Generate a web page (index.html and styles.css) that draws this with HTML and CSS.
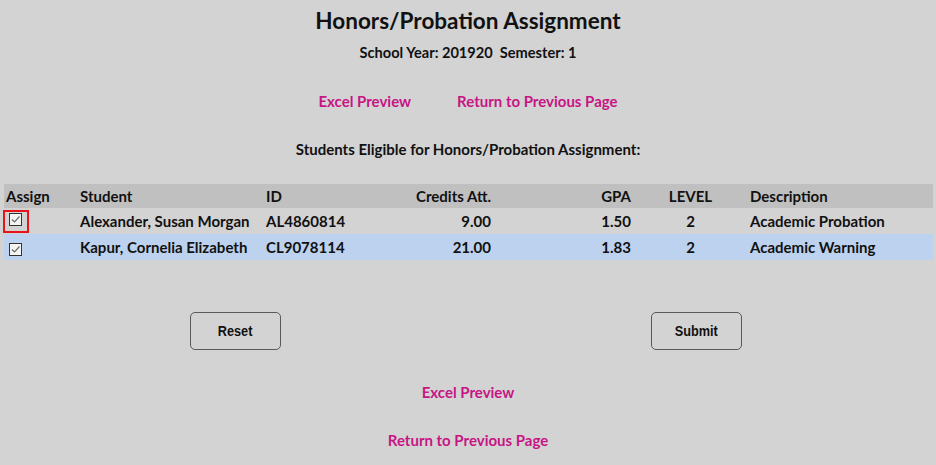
FILE: index.html
```html
<!DOCTYPE html>
<html>
<head>
<meta charset="utf-8">
<link rel="stylesheet" href="styles.css">
</head>
<body>
<h1 class="title">Honors/Probation Assignment</h1>
<p class="term">School Year: 201920&nbsp;&nbsp;Semester: 1</p>
<div class="links top-links">
  <a href="#">Excel Preview</a>
  <a href="#">Return to Previous Page</a>
</div>
<p class="eligible">Students Eligible for Honors/Probation Assignment:</p>
<table class="grid">
  <colgroup>
    <col class="c-assign"><col class="c-student"><col class="c-id"><col class="c-credits"><col class="c-gpa"><col class="c-level"><col class="c-desc">
  </colgroup>
  <thead>
    <tr>
      <th class="left">Assign</th>
      <th class="left">Student</th>
      <th class="left">ID</th>
      <th class="right">Credits Att.</th>
      <th class="right">GPA</th>
      <th class="center">LEVEL</th>
      <th class="left">Description</th>
    </tr>
  </thead>
  <tbody>
    <tr>
      <td><span class="focus"><span class="box"><svg viewBox="0 0 11 11" width="11" height="11"><path d="M2 5.5 L4.5 8 L9.5 2.5" fill="none" stroke="#6b6b6b" stroke-width="1.2"/></svg></span></span></td>
      <td>Alexander, Susan Morgan</td>
      <td>AL4860814</td>
      <td class="right">9.00</td>
      <td class="right">1.50</td>
      <td class="center">2</td>
      <td>Academic Probation</td>
    </tr>
    <tr class="alt">
      <td><span class="plain"><span class="box"><svg viewBox="0 0 11 11" width="11" height="11"><path d="M2 5.5 L4.5 8 L9.5 2.5" fill="none" stroke="#6b6b6b" stroke-width="1.2"/></svg></span></span></td>
      <td>Kapur, Cornelia Elizabeth</td>
      <td>CL9078114</td>
      <td class="right">21.00</td>
      <td class="right">1.83</td>
      <td class="center">2</td>
      <td>Academic Warning</td>
    </tr>
  </tbody>
</table>
<div class="actions">
  <button class="btn" type="button"><span class="btn-label">Reset</span></button>
  <button class="btn" type="button"><span class="btn-label">Submit</span></button>
</div>
<div class="links stacked first"><a href="#">Excel Preview</a></div>
<div class="links stacked second"><a href="#">Return to Previous Page</a></div>
</body>
</html>
```
FILE: styles.css
```css
html, body {
  margin: 0;
  padding: 0;
}
body {
  background: #d3d3d3;
  font-family: "Lato", "Noto Sans", sans-serif;
  color: #111;
  width: 936px;
  height: 465px;
  overflow: hidden;
}
.title {
  margin: 8px 0 0;
  font-size: 22.5px;
  line-height: 26px;
  font-weight: 700;
  text-align: center;
}
.term {
  margin: 10px 0 0;
  font-size: 14.6px;
  line-height: 18px;
  font-weight: 700;
  text-align: center;
}
.links {
  display: flex;
  justify-content: center;
  font-size: 15px;
  line-height: 18px;
  font-weight: 700;
}
.links a {
  color: #c71585;
  text-decoration: none;
}
.top-links {
  margin-top: 30px;
  gap: 46px;
}
.eligible {
  margin: 30px 0 0;
  font-size: 15px;
  line-height: 18px;
  font-weight: 700;
  text-align: center;
}
.grid {
  margin: 26px 0 0 4px;
  width: 929px;
  border-collapse: collapse;
  table-layout: fixed;
  font-size: 15px;
  font-weight: 700;
}
.c-assign { width: 74px; }
.c-student { width: 186px; }
.c-id { width: 116px; }
.c-credits { width: 113px; }
.c-gpa { width: 140px; }
.c-level { width: 115px; }
.c-desc { width: 185px; }
.grid th, .grid td {
  padding: 0 2px;
  white-space: nowrap;
  text-align: left;
}
.grid thead tr {
  background: #c0c0c0;
  height: 24px;
}
.grid th { font-weight: 700; }
.grid tbody tr { height: 26px; }
.grid tr.alt { background: #bdd2ee; }
.grid .right { text-align: right; }
.grid .center { text-align: center; }
.focus, .plain {
  display: inline-flex;
  vertical-align: middle;
}
.focus {
  margin-left: -3px;
  border: 2px solid #e8141b;
  padding: 1px 5px 5px 4px;
}
.plain {
  margin-left: 3px;
}
.box {
  width: 11px;
  height: 11px;
  border: 1px solid #333;
  background: #f4f4f4;
  display: inline-flex;
}
.actions {
  display: flex;
  gap: 370px;
  padding-left: 190px;
  margin-top: 52px;
}
.btn {
  width: 91px;
  height: 38px;
  border: 1px solid #5a5a5a;
  border-radius: 5px;
  background: transparent;
  font-family: "Liberation Sans", Arial, sans-serif;
  font-size: 15.5px;
  font-weight: 700;
  color: #111;
  padding: 0;
}
.btn-label {
  display: inline-block;
  transform: scaleX(0.82);
}
.stacked.first { margin-top: 33px; }
.stacked.second { margin-top: 30px; }
```
